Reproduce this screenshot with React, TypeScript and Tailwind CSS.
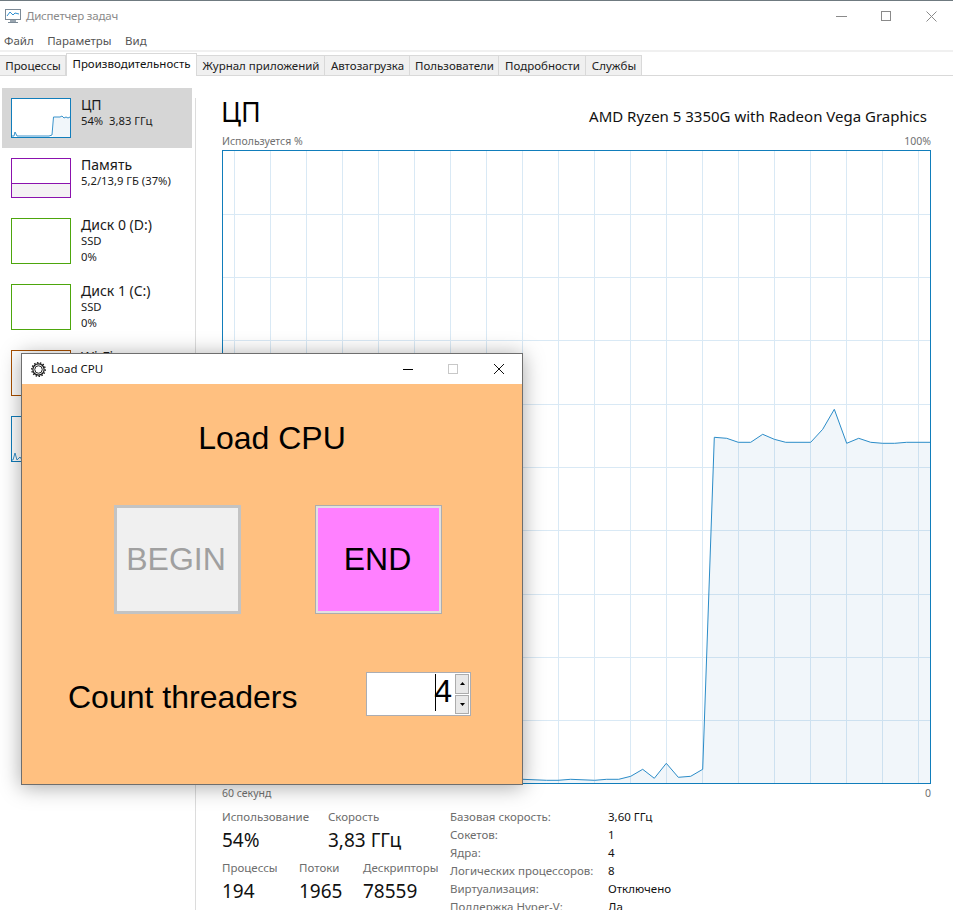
import { Fragment } from 'react'

const tabs = [
  { name: 'Процессы', width: 'w-[66px]' },
  { name: 'Производительность', width: 'w-[131px]', active: true },
  { name: 'Журнал приложений', width: 'w-[128px]' },
  { name: 'Автозагрузка', width: 'w-[85px]' },
  { name: 'Пользователи', width: 'w-[89px]' },
  { name: 'Подробности', width: 'w-[87px]' },
  { name: 'Службы', width: 'w-[56px]' },
]

const details = [
  ['Базовая скорость:', '3,60 ГГц'],
  ['Сокетов:', '1'],
  ['Ядра:', '4'],
  ['Логических процессоров:', '8'],
  ['Виртуализация:', 'Отключено'],
  ['Поддержка Hyper-V:', 'Да'],
]

const cpuPoints =
  '222,779 522.7,779.3 546.7,780.3 558,780.3 570.7,779.3 594.7,780.3 606.7,779.3 618.7,779.3 630.7,776.3 642.7,769.3 654.3,778.3 666.3,763.3 678.3,777.3 690.7,776.3 702.7,769.3 714.3,437.3 726.7,438.3 738.3,442.3 750.7,442.3 762.7,434.3 774.3,439.3 785.7,442.3 810.7,442.3 822.7,429.3 834.3,409.3 846.7,443.3 858.7,438.3 870.7,442.3 882.7,443.3 894.7,443.3 906.7,442.3 930,442.3'

const vLines = Array.from({ length: 20 }, (_, i) => 234.5 + i * 36)
const hLines = [214, 277, 340, 404, 467, 530, 594, 657, 720]

function CpuChart() {
  return (
    <svg viewBox="222 150 709 634" className="block h-[634px] w-[709px] border-0">
      {vLines.map((x) => (
        <line key={x} x1={x} x2={x} y1={150} y2={784} stroke="#d9e9f5" strokeWidth="1" />
      ))}
      {hLines.map((y) => (
        <line key={y} x1={222} x2={930} y1={y + 0.5} y2={y + 0.5} stroke="#d9e9f5" strokeWidth="1" />
      ))}
      <polygon points={`${cpuPoints} 930,783 222,783`} fill="#0f6cb0" fillOpacity="0.06" />
      <polyline points={cpuPoints} fill="none" stroke="#2b8cc8" strokeWidth="1" />
      <rect x="222.5" y="150.5" width="708" height="633" fill="none" stroke="#117dbb" strokeWidth="1" />
    </svg>
  )
}

function SmallCpu() {
  return (
    <div className="h-10 w-[60px] border border-[#117dbb] bg-white">
      <svg viewBox="0 0 58 38" className="block h-[38px] w-[58px]">
        <polygon points="41,38 41.5,18 58,18 58,38" fill="#f1f6fa" />
        <polyline
          points="0,37 2,37 3,33 5,37 37,37 40,36 41.5,18 48,18 50,17 52,19 54,18 56,19 58,18"
          fill="none"
          stroke="#3a93cb"
          strokeWidth="1"
        />
      </svg>
    </div>
  )
}

function SmallNet() {
  return (
    <div className="h-[46px] w-[60px] border border-[#117dbb] bg-white">
      <svg viewBox="0 0 58 44" className="block h-[44px] w-[58px]">
        <polyline points="0,43 1,43 3,36 5,43 8,40 10,43 58,43" fill="none" stroke="#3a93cb" strokeWidth="1" />
      </svg>
    </div>
  )
}

function SidebarItem({
  title,
  lines,
  selected,
  thumb,
}: {
  title: string
  lines: string[]
  selected?: boolean
  thumb: React.ReactNode
}) {
  return (
    <div className={`flex gap-[10px] pl-[9px] pt-[10px] ${selected ? 'h-[60px] bg-[#d6d6d6]' : lines.length > 1 ? 'h-[66px]' : 'h-[60px]'}`}>
      {thumb}
      <div className="-mt-[2px] min-w-0 whitespace-pre">
        <div className="text-[14px] leading-[17px] text-[#1a1a1a]">{title}</div>
        {lines.map((line) => (
          <div key={line} className="text-[11.25px] leading-[16px] text-[#1a1a1a]">
            {line}
          </div>
        ))}
      </div>
    </div>
  )
}

function Stat({ label, value, className }: { label: string; value: string; className: string }) {
  return (
    <div className={className}>
      <div className="whitespace-nowrap text-[11.5px] leading-[16px] text-[#6d6d6d]">{label}</div>
      <div className="mt-[3px] whitespace-nowrap text-[19px] leading-[25px] text-[#111]">{value}</div>
    </div>
  )
}

function LoadCpuWindow() {
  return (
    <div className="absolute left-[21px] top-[353px] flex h-[432px] w-[502px] flex-col border border-[#6e6e6e] shadow-[0_2px_20px_rgba(0,0,0,0.35)]">
      <div className="flex h-[30px] items-center bg-white pl-[9px]">
        <svg viewBox="0 0 16 16" className="h-[15px] w-[15px]">
          <circle cx="8" cy="8" r="6" fill="none" stroke="#111" strokeWidth="1.2" />
          <circle cx="8" cy="8" r="4" fill="none" stroke="#111" strokeWidth="1" />
          <circle cx="8" cy="8" r="7.2" fill="none" stroke="#111" strokeWidth="1.4" strokeDasharray="1.6 1.6" />
        </svg>
        <span className="ml-[5px] text-[11.5px] leading-none text-[#111]">Load CPU</span>
        <div className="ml-auto flex items-center">
          <svg viewBox="0 0 46 14" className="h-[14px] w-[46px]">
            <line x1="1" x2="11" y1="7.5" y2="7.5" stroke="#000" strokeWidth="1" />
          </svg>
          <svg viewBox="0 0 46 14" className="h-[14px] w-[46px]">
            <rect x="0.5" y="2.5" width="9" height="9" fill="none" stroke="#c8c8c8" strokeWidth="1" />
          </svg>
          <svg viewBox="0 0 28 14" className="h-[14px] w-[28px]">
            <path d="M0 2 L10 12 M10 2 L0 12" fill="none" stroke="#111" strokeWidth="1" />
          </svg>
        </div>
      </div>
      <div className="flex flex-1 flex-col bg-[#ffc080] font-['Liberation_Sans',sans-serif] text-black">
        <div className="mt-[34px] text-center text-[32px] leading-[40px]">Load CPU</div>
        <div className="ml-[92px] mt-[47px] flex gap-[74px]">
          <div className="flex h-[109px] w-[127px] items-center justify-center border-[3px] border-[#c3c3c3] bg-[#f0f0f0] pb-[2px] pr-[3px] text-[32px] text-[#a0a0a0]">
            BEGIN
          </div>
          <div className="h-[109px] w-[127px] border border-[#adadad]">
            <div className="flex h-full items-center justify-center border-2 border-[#e1e1e1] bg-[#ff80ff] pb-[2px] pr-[2px] text-[32px]">
              END
            </div>
          </div>
        </div>
        <div className="ml-[46px] mt-[58px] flex items-start">
          <div className="mt-[3px] w-[298px] text-[32px] leading-[44px]">Count threaders</div>
          <div className="flex h-[44px] w-[105px] border border-[#abadb3] bg-white p-[1px]">
            <div className="relative flex-1 pr-[3px] text-right text-[32px] leading-[34px]">
              4
              <span className="absolute right-[19px] top-0 h-[37px] w-px bg-black" />
            </div>
            <div className="flex w-[14px] flex-col gap-[1px]">
              <div className="flex flex-1 items-center justify-center border border-[#acacac] bg-[#e8e8e8]">
                <svg viewBox="0 0 5 3" className="h-[3px] w-[5px]"><polygon points="2.5,0 5,3 0,3" fill="#000" /></svg>
              </div>
              <div className="flex flex-1 items-center justify-center border border-[#acacac] bg-[#e8e8e8]">
                <svg viewBox="0 0 5 3" className="h-[3px] w-[5px]"><polygon points="0,0 5,0 2.5,3" fill="#000" /></svg>
              </div>
            </div>
          </div>
        </div>
      </div>
    </div>
  )
}

export default function App() {
  return (
    <div className="relative h-[910px] w-[953px] overflow-hidden bg-white font-['Noto_Sans',sans-serif]">
      <div className="h-px bg-[#6f7a80]" />
      <div className="flex h-[30px] items-center pl-[5px]">
        <svg viewBox="0 0 16 16" className="h-[16px] w-[16px]">
          <rect x="0.5" y="1.5" width="15" height="10" fill="#fff" stroke="#7c8a96" />
          <polyline points="2,8 5,4 8,7 10,5 14,6" fill="none" stroke="#2f8fd0" strokeWidth="1" />
          <rect x="5" y="12" width="6" height="2" fill="#9aa6b0" />
          <rect x="3" y="14" width="10" height="1" fill="#7c8a96" />
        </svg>
        <span className="ml-[5px] text-[11.5px] leading-none tracking-[-0.2px] text-[#8a8a8a]">Диспетчер задач</span>
        <div className="ml-auto flex items-center pr-[16px]">
          <svg viewBox="0 0 11 11" className="h-[11px] w-[11px]">
            <line x1="0" x2="11" y1="5.5" y2="5.5" stroke="#8a8a8a" />
          </svg>
          <svg viewBox="0 0 10 10" className="ml-[34px] h-[10px] w-[10px]">
            <rect x="0.5" y="0.5" width="9" height="9" fill="none" stroke="#8a8a8a" />
          </svg>
          <svg viewBox="0 0 11 11" className="ml-[35px] h-[11px] w-[11px]">
            <path d="M0.5 0.5 L10.5 10.5 M10.5 0.5 L0.5 10.5" fill="none" stroke="#8a8a8a" />
          </svg>
        </div>
      </div>
      <div className="flex h-[19px] items-center gap-[13.5px] pl-[4px] text-[11.5px] text-[#555]">
        <span>Файл</span>
        <span>Параметры</span>
        <span>Вид</span>
      </div>
      <div className="h-[2px] bg-[#f0f0f0]" />
      <div className="flex h-[24px] items-end border-b border-[#d9d9d9]">
        {tabs.map((tab) =>
          tab.active ? (
            <div
              key={tab.name}
              className={`${tab.width} relative z-10 -mb-px h-[23px] whitespace-nowrap border border-b-0 border-[#d9d9d9] bg-white text-center text-[11.5px] leading-[20px] text-[#111]`}
            >
              {tab.name}
            </div>
          ) : (
            <div
              key={tab.name}
              className={`${tab.width} h-[20px] whitespace-nowrap border-r border-t border-[#d9d9d9] bg-[#f0f0f0] pl-[1px] text-center text-[11.5px] leading-[19px] text-[#222]`}
            >
              {tab.name}
            </div>
          ),
        )}
      </div>

      <div className="flex">
        <div className="ml-[2px] mt-[12px] w-[190px]">
          <SidebarItem title="ЦП" lines={['54%  3,83 ГГц']} selected thumb={<SmallCpu />} />
          <SidebarItem
            title="Память"
            lines={['5,2/13,9 ГБ (37%)']}
            thumb={
              <div className="flex h-10 w-[60px] flex-col border border-[#8b12ae]">
                <div className="h-[25px] border-b border-[#8b12ae]" />
                <div className="flex-1 bg-[#f4f2f4]" />
              </div>
            }
          />
          <SidebarItem
            title="Диск 0 (D:)"
            lines={['SSD', '0%']}
            thumb={<div className="h-[46px] w-[60px] border border-[#4da60c]" />}
          />
          <SidebarItem
            title="Диск 1 (C:)"
            lines={['SSD', '0%']}
            thumb={<div className="h-[46px] w-[60px] border border-[#4da60c]" />}
          />
          <SidebarItem
            title="Wi-Fi"
            lines={['', ' ']}
            thumb={<div className="h-[46px] w-[60px] border border-[#a74f01]" />}
          />
          <SidebarItem title="" lines={['', ' ']} thumb={<SmallNet />} />
        </div>
        <div className="ml-[3px] mt-[22px] h-[820px] w-px bg-[#dcdcdc]" />

        <div className="w-[735px] pl-[26px]">
          <div className="flex h-[59px] w-[705px] items-end justify-between">
            <span className="mb-[5px] -ml-px text-[27px] leading-[36px] text-black">ЦП</span>
            <span className="mb-[9px] text-[15px] leading-[20px] text-[#111]">AMD Ryzen 5 3350G with Radeon Vega Graphics</span>
          </div>
          <div className="flex h-[15px] w-[709px] items-end justify-between pb-[2px] text-[10.5px] leading-[14px] text-[#707070]">
            <span>Используется %</span>
            <span>100%</span>
          </div>
          <CpuChart />
          <div className="flex h-[19px] w-[709px] items-center justify-between text-[10.5px] text-[#707070]">
            <span>60 секунд</span>
            <span>0</span>
          </div>
          <div className="mt-[6px] flex">
            <div className="w-[228px]">
              <div className="flex">
                <Stat label="Использование" value="54%" className="w-[106px]" />
                <Stat label="Скорость" value="3,83 ГГц" className="" />
              </div>
              <div className="mt-[7px] flex">
                <Stat label="Процессы" value="194" className="w-[77px]" />
                <Stat label="Потоки" value="1965" className="w-[64px]" />
                <Stat label="Дескрипторы" value="78559" className="" />
              </div>
            </div>
            <div className="-mt-px grid auto-rows-[18px] grid-cols-[158px_auto] text-[11.5px] leading-[18px]">
              {details.map(([label, value]) => (
                <Fragment key={label}>
                  <span className="whitespace-nowrap text-[#6d6d6d]">{label}</span>
                  <span className="text-[#111]">{value}</span>
                </Fragment>
              ))}
            </div>
          </div>
        </div>
      </div>

      <LoadCpuWindow />
    </div>
  )
}
